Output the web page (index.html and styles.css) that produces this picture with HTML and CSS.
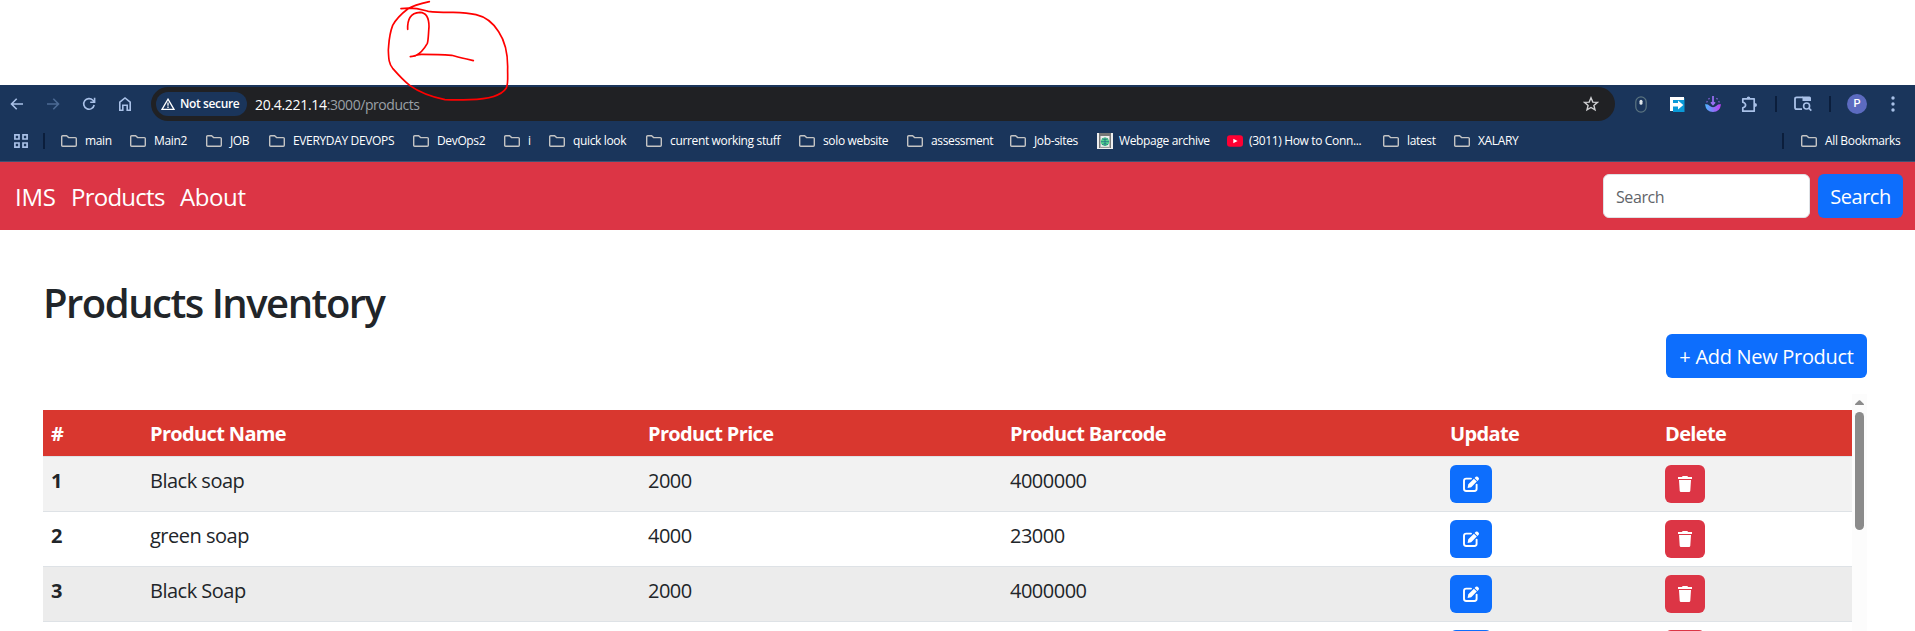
FILE: index.html
```html
<!DOCTYPE html>
<html lang="en">
<head>
<meta charset="utf-8">
<title>Products Inventory</title>
<link rel="stylesheet" href="styles.css">
</head>
<body>
<svg class="defs" width="0" height="0">
  <symbol id="folder" viewBox="0 0 16 12"><path d="M.7 10V1.7Q.7.7 1.7.7H5.6L7.6 2.6H14.3Q15.3 2.6 15.3 3.6V10.3Q15.3 11.3 14.3 11.3H1.7Q.7 11.3 .7 10.3Z" fill="none" stroke="#c4c4c4" stroke-width="1.4"/></symbol>
  <symbol id="edit" viewBox="0 0 16 16"><path d="M8 2.6H3.2Q1 2.6 1 4.8V12.8Q1 15 3.2 15H11.4Q13.6 15 13.6 12.8V8.6" fill="none" stroke="#fff" stroke-width="1.9" stroke-linecap="round"/><path d="M4.6 11.9L5.3 8.3 10.9 2.7 13.8 5.6 8.2 11.2ZM11.6 2L12.8.8Q13.7 0 14.7.8L15.6 1.7Q16.4 2.7 15.6 3.7L14.5 4.9Z" fill="#fff"/></symbol>
  <symbol id="trash" viewBox="0 0 14 16"><path d="M0 1H4L4.6 0H9.4L10 1H14V3H0ZM1 4H13L12.3 14.7Q12.2 16 11 16H3Q1.8 16 1.7 14.7Z" fill="#fff"/></symbol>
</svg>

<header class="browser">
  <div class="toolbar">
    <svg class="nav-icon" viewBox="0 0 16 16"><path d="M14 8H2.5M7.7 2.8L2.5 8L7.7 13.2"/></svg>
    <svg class="nav-icon dim" viewBox="0 0 16 16"><path d="M2 8H13.5M8.3 2.8L13.5 8L8.3 13.2"/></svg>
    <svg class="nav-icon" viewBox="0 0 16 16"><path d="M13.2 9A5.3 5.3 0 1 1 11.9 4.3L13.6 6M13.6 1.8V6.2H9.2"/></svg>
    <svg class="nav-icon" viewBox="0 0 16 16"><path d="M2.8 14.2V6.2L8 2L13.2 6.2V14.2H10.2V9.2H5.8V14.2Z"/></svg>
    <div class="omnibox">
      <div class="chip">
        <svg class="warn" viewBox="0 0 14 12"><path d="M7 1.2L13 11.3H1Z" fill="none" stroke="#fff" stroke-width="1.3"/><path d="M7 4.5V7.7M7 8.6V9.9" stroke="#fff" stroke-width="1.3"/></svg>
        <span>Not secure</span>
      </div>
      <div class="url"><b>20.4.221.14</b>:3000/products</div>
      <svg class="star" viewBox="0 0 16 16"><path d="M8 1.8L9.8 6.1L14.4 6.4L10.9 9.4L12 13.9L8 11.5L4 13.9L5.1 9.4L1.6 6.4L6.2 6.1Z" fill="none" stroke="#cfd0d2" stroke-width="1.4"/></svg>
    </div>
    <div class="extensions">
      <svg class="ext-mouse" viewBox="0 0 12 17"><rect x=".8" y=".8" width="10.4" height="15.4" rx="5.2" fill="none" stroke="#5b7480" stroke-width="1.2"/><rect x="4.5" y="3.8" width="3" height="5" rx="1.5" fill="#dfe5ea"/></svg>
      <svg class="ext-f" viewBox="0 0 15 15"><path d="M1 1H14.5V15H3V12H1Z" fill="#0a9ad8"/><path d="M0 0H14V3H3V6H8V3.6L13.3 8L8 12.4V9.4H3V14H0Z" fill="#fff"/></svg>
      <svg class="ext-power" viewBox="0 0 16 16"><defs><linearGradient id="pg"><stop offset="0" stop-color="#49b8ff"/><stop offset="1" stop-color="#c23cf5"/></linearGradient></defs><path d="M0 8.3Q3.2 8 4.2 9.5Q8 13 11.8 9.5Q12.8 8 16 8.3Q15 16 8 16Q1 16 0 8.3Z" fill="url(#pg)"/><path d="M8 0V8M6 6.2L8 8.4L10 6.2" fill="none" stroke="#9a70f5" stroke-width="1.7"/><path d="M1.5 5.5L2.5 6M3.6 2.3L4.4 3.2M12.4 2.3L11.6 3.2M14.5 5.5L13.5 6" stroke="#8c63dd" stroke-width="1.5"/></svg>
      <svg class="ext-puzzle" viewBox="0 0 17 17"><path d="M1.8 2.8H13.2V15.2H1.8V11.8Q4.6 11 4.6 9Q4.6 7 1.8 6.2Z" fill="none" stroke="#a9c1e8" stroke-width="1.7" stroke-linejoin="round"/><path d="M5.6 2.4Q5.8.5 7.5.5Q9.2.5 9.4 2.4ZM13.6 7Q16 7.2 16 9Q16 10.8 13.6 11Z" fill="#a9c1e8"/></svg>
      <i class="sep"></i>
      <svg class="ext-lens" viewBox="0 0 18 16"><path d="M8 13.2H2.7Q1 13.2 1 11.5V3Q1 1.3 2.7 1.3H9" fill="none" stroke="#a9c1e8" stroke-width="1.8"/><path d="M8.5.4H15.5Q17 .4 17 2V5H8.5Z" fill="#a9c1e8"/><circle cx="12.6" cy="10" r="3" fill="none" stroke="#a9c1e8" stroke-width="1.6"/><path d="M14.7 12L17.3 14.7" stroke="#a9c1e8" stroke-width="1.7"/></svg>
      <i class="sep"></i>
      <span class="avatar">P</span>
      <svg class="ext-dots" viewBox="0 0 4 16"><g fill="#a9c1e8"><circle cx="2" cy="2" r="1.7"/><circle cx="2" cy="8" r="1.7"/><circle cx="2" cy="14" r="1.7"/></g></svg>
    </div>
  </div>

  <div class="bookmarks">
    <svg class="apps" viewBox="0 0 14 14"><path d="M.9.9H5V5H.9ZM9 .9H13.1V5H9ZM.9 9H5V13.1H.9ZM9 9H13.1V13.1H9Z" fill="none" stroke="#a9c1e8" stroke-width="1.7"/></svg>
    <i class="sep"></i>
    <div class="bookmark-list">
      <span class="bm"><svg><use href="#folder"/></svg>main</span>
      <span class="bm"><svg><use href="#folder"/></svg>Main2</span>
      <span class="bm"><svg><use href="#folder"/></svg>JOB</span>
      <span class="bm"><svg><use href="#folder"/></svg>EVERYDAY DEVOPS</span>
      <span class="bm"><svg><use href="#folder"/></svg>DevOps2</span>
      <span class="bm"><svg><use href="#folder"/></svg>i</span>
      <span class="bm"><svg><use href="#folder"/></svg>quick look</span>
      <span class="bm"><svg><use href="#folder"/></svg>current working stuff</span>
      <span class="bm"><svg><use href="#folder"/></svg>solo website</span>
      <span class="bm"><svg><use href="#folder"/></svg>assessment</span>
      <span class="bm"><svg><use href="#folder"/></svg>Job-sites</span>
      <span class="bm site"><svg class="fav" viewBox="0 0 16 16"><path d="M0 0H16V16H0Z" fill="#eee"/><path d="M2 0H14V3H2ZM2 3H3.5V15H2ZM12.5 3H14V15H12.5Z" fill="#777"/><path d="M3.5 13.8H12.5V15H3.5Z" fill="#999"/><circle cx="8" cy="8.7" r="4.3" fill="#55d68d"/><path d="M8 4.5V13M4 8.7H12M5 5.7Q8 8 11 5.7M5 11.7Q8 9.5 11 11.7" fill="none" stroke="#246f86" stroke-width=".8"/></svg>Webpage archive</span>
      <span class="bm site"><svg class="fav" viewBox="0 0 16 16"><rect y="2.3" width="16" height="11.4" rx="3" fill="#f03"/><path d="M6.3 5.8L10.6 8L6.3 10.2Z" fill="#fff"/></svg>(3011) How to Conn...</span>
      <span class="bm"><svg><use href="#folder"/></svg>latest</span>
      <span class="bm"><svg><use href="#folder"/></svg>XALARY</span>
    </div>
    <i class="sep"></i>
    <span class="bm all"><svg><use href="#folder"/></svg>All Bookmarks</span>
  </div>
</header>

<nav class="navbar">
  <a class="ims">IMS</a><a class="products">Products</a><a class="about">About</a>
  <form class="search">
    <input type="text" placeholder="Search">
    <button type="button" class="btn">Search</button>
  </form>
</nav>

<main class="content">
  <h1>Products Inventory</h1>
  <div class="actions"><button class="btn add">+ Add New Product</button></div>
  <div class="scroll-area">
    <table class="table">
      <colgroup><col class="c1"><col class="c2"><col class="c3"><col class="c4"><col class="c5"><col class="c6"></colgroup>
      <thead><tr><th>#</th><th>Product Name</th><th>Product Price</th><th>Product Barcode</th><th>Update</th><th>Delete</th></tr></thead>
      <tbody>
        <tr class="odd"><th>1</th><td>Black soap</td><td>2000</td><td>4000000</td><td class="act"><button class="icon-btn edit"><svg><use href="#edit"/></svg></button></td><td class="act"><button class="icon-btn del"><svg><use href="#trash"/></svg></button></td></tr>
        <tr><th>2</th><td>green soap</td><td>4000</td><td>23000</td><td class="act"><button class="icon-btn edit"><svg><use href="#edit"/></svg></button></td><td class="act"><button class="icon-btn del"><svg><use href="#trash"/></svg></button></td></tr>
        <tr class="hover"><th>3</th><td>Black Soap</td><td>2000</td><td>4000000</td><td class="act"><button class="icon-btn edit"><svg><use href="#edit"/></svg></button></td><td class="act"><button class="icon-btn del"><svg><use href="#trash"/></svg></button></td></tr>
        <tr><th></th><td></td><td></td><td></td><td class="act"><button class="icon-btn edit"></button></td><td class="act"><button class="icon-btn del"></button></td></tr>
      </tbody>
    </table>
    <div class="scrollbar"><svg viewBox="0 0 9 5"><path d="M0 5Q0 4 .6 3.6L4 .3Q4.5 0 5 .3L8.4 3.6Q9 4 9 5Z" fill="#8b8b8b"/></svg><div class="thumb"></div></div>
  </div>
</main>

<svg class="annotation" viewBox="0 0 600 330"><path d="M208 5C180 11 160 16 143 27C122 43 108 58 98 76C86 108 87 130 85 150C86 175 86 190 98 205C120 230 135 245 150 257C185 282 220 292 255 299C280 300 300 300 330 299C380 298 422 290 439 264C446 248 442 225 443 200C443 150 434 122 416 95C400 70 375 50 348 44C320 38 300 38 270 37C240 37 220 36 205 34C185 29 165 20 123 26M143 88C142 60 150 38 180 37C200 38 207 52 207 80C205 105 205 122 202 130C192 148 182 160 165 168L151 170C165 168 172 163 185 163C220 163 250 164 275 166C290 171 300 173 320 177L340 182"/></svg>
</body>
</html>
```
FILE: styles.css
```css
* { box-sizing: border-box; }
html { height: 100%; }
body {
  margin: 0;
  height: 631px;
  padding-top: 85px;
  overflow: hidden;
  position: relative;
  display: flex;
  flex-direction: column;
  background: #fff;
  color: #212529;
  font: 20px/1.5 "Open Sans", "Noto Sans", sans-serif;
}
svg { display: block; flex: none; }
button, input { font: inherit; margin: 0; border: 0; }
.defs { position: absolute; }

.browser {
  height: 77px;
  flex: none;
  background: #1a355b;
  border-bottom: 1px solid #3f5173;
  font-size: 12px;
  color: #fff;
}
.toolbar { display: flex; align-items: center; height: 38px; padding-left: 9px; }
.nav-icon { width: 16px; height: 16px; margin-right: 20px; fill: none; stroke: #a9c1e8; stroke-width: 1.6; }
.nav-icon.dim { stroke: #4c6a94; }
.omnibox {
  display: flex;
  align-items: center;
  width: 1464px;
  height: 34px;
  margin-left: -2px;
  padding: 0 16px 0 5px;
  border-radius: 17px;
  background: #202124;
}
.chip {
  display: flex;
  align-items: center;
  gap: 5px;
  width: 91px;
  height: 24px;
  padding-left: 5px;
  border-radius: 12px;
  background: #1a355b;
  font-weight: 600;
  letter-spacing: -0.37px;
  white-space: nowrap;
}
.warn { width: 14px; height: 12px; }
.url { margin-left: 8px; flex: 1; color: #9aa0a6; font-size: 14px; letter-spacing: -0.45px; }
.url b { font-weight: 400; color: #fff; letter-spacing: -0.3px; }
.star { width: 16px; height: 16px; }
.extensions { display: flex; align-items: center; }
.ext-mouse { width: 12px; height: 17px; margin-left: 20px; }
.ext-f { width: 15px; height: 15px; margin-left: 23px; }
.ext-power { width: 16px; height: 16px; margin-left: 20px; }
.ext-puzzle { width: 17px; height: 17px; margin: 0 17px 0 20px; }
.ext-lens { width: 18px; height: 16px; margin: 0 17px; }
.ext-dots { width: 4px; height: 16px; margin-left: 24px; }
.sep { width: 2px; height: 16px; background: #0b1e3c; }
.avatar {
  width: 20px;
  height: 20px;
  margin-left: 16px;
  border-radius: 50%;
  background: #5c6bc0;
  font: 500 11px/20px Roboto, sans-serif;
  text-align: center;
}
.bookmarks { display: flex; align-items: center; height: 36px; padding-left: 14px; }
.apps { width: 14px; height: 14px; margin-right: 15px; }
.bookmark-list {
  display: grid;
  grid-template-columns: 69px 76px 63px 144px 91px 45px 97px 153px 108px 103px 87px 130px 156px 71px 80px;
  width: 1721px;
  margin-left: 16px;
}
.bm { display: flex; align-items: center; gap: 8px; white-space: nowrap; line-height: 18px; letter-spacing: -0.35px; }
.bm svg { width: 16px; height: 12px; }
.bm.site { gap: 6px; }
.bm svg.fav { height: 16px; }
.bm.all { margin-left: 17px; }

.navbar {
  display: flex;
  align-items: center;
  flex: none;
  height: 68px;
  padding: 0 12px 0 15px;
  background: #dc3545;
  color: #fff;
  font-size: 24px;
  letter-spacing: -0.75px;
}
.navbar a { padding-top: 1px; }
.ims { width: 56px; }
.navbar .ims { letter-spacing: -0.3px; }
.products { width: 109px; }
.navbar .about { letter-spacing: -0.4px; }
.search { display: flex; gap: 8px; margin-left: auto; }
.search input {
  width: 207px;
  height: 44px;
  padding: 1px 12px 0;
  border: 1px solid #dee2e6;
  border-radius: 6px;
  background: #fff;
  font-size: 16px;
  letter-spacing: -0.4px;
}
.search input::placeholder { color: #5f6469; }
.btn {
  width: 85px;
  height: 44px;
  padding: 1px 0 0;
  border-radius: 6px;
  background: #0d6efd;
  color: #fff;
  font-size: 20px;
  letter-spacing: -0.5px;
  white-space: nowrap;
}
.btn.add { width: 201px; letter-spacing: -0.3px; }

.content { display: flex; flex-direction: column; flex: 1; padding: 49px 48px 0 43px; min-height: 0; }
h1 { margin: 0 0 7px; font-size: 40px; font-weight: 600; line-height: 48px; letter-spacing: -1.5px; }
.actions { display: flex; justify-content: flex-end; margin-bottom: 16px; }
.scroll-area { display: flex; align-items: flex-start; flex: 1; min-height: 0; overflow: hidden; }
.table { width: 1809px; margin-top: 16px; table-layout: fixed; border-collapse: separate; border-spacing: 0; letter-spacing: -0.5px; }
.c1 { width: 99px; }
.c2 { width: 498px; }
.c3 { width: 362px; }
.c4 { width: 440px; }
.c5 { width: 215px; }
.c6 { width: 195px; }
.table th, .table td { padding: 9px 8px 7px; border-bottom: 1px solid #dee2e6; text-align: left; vertical-align: top; line-height: 30px; }
.table th { font-weight: 700; letter-spacing: -0.65px; }
.table .act { padding: 8px; }
.table thead th { background: #d9372f; color: #fff; }
.table tbody tr { height: 55px; }
.odd > * { background: #f2f2f2; }
.hover > * { background: #ececec; }
.icon-btn { display: flex; align-items: center; justify-content: center; height: 38px; padding: 0; border-radius: 6px; }
.icon-btn.edit { width: 42px; background: #0d6efd; }
.icon-btn.del { width: 40px; background: #dc3545; }
.icon-btn svg { width: 16px; height: 16px; }
.icon-btn.del svg { width: 14px; }
.scrollbar { display: flex; flex-direction: column; align-items: center; width: 15px; height: 100%; padding-top: 6px; background: #fcfcfc; }
.scrollbar svg { width: 9px; height: 5px; }
.thumb { width: 9px; height: 118px; margin-top: 7px; border-radius: 5px; background: #8b8b8b; }

.annotation {
  position: absolute;
  left: 360px;
  top: 0;
  width: 200px;
  height: 110px;
  fill: none;
  stroke: #f00;
  stroke-width: 5;
  stroke-linecap: round;
  stroke-linejoin: round;
}
```
